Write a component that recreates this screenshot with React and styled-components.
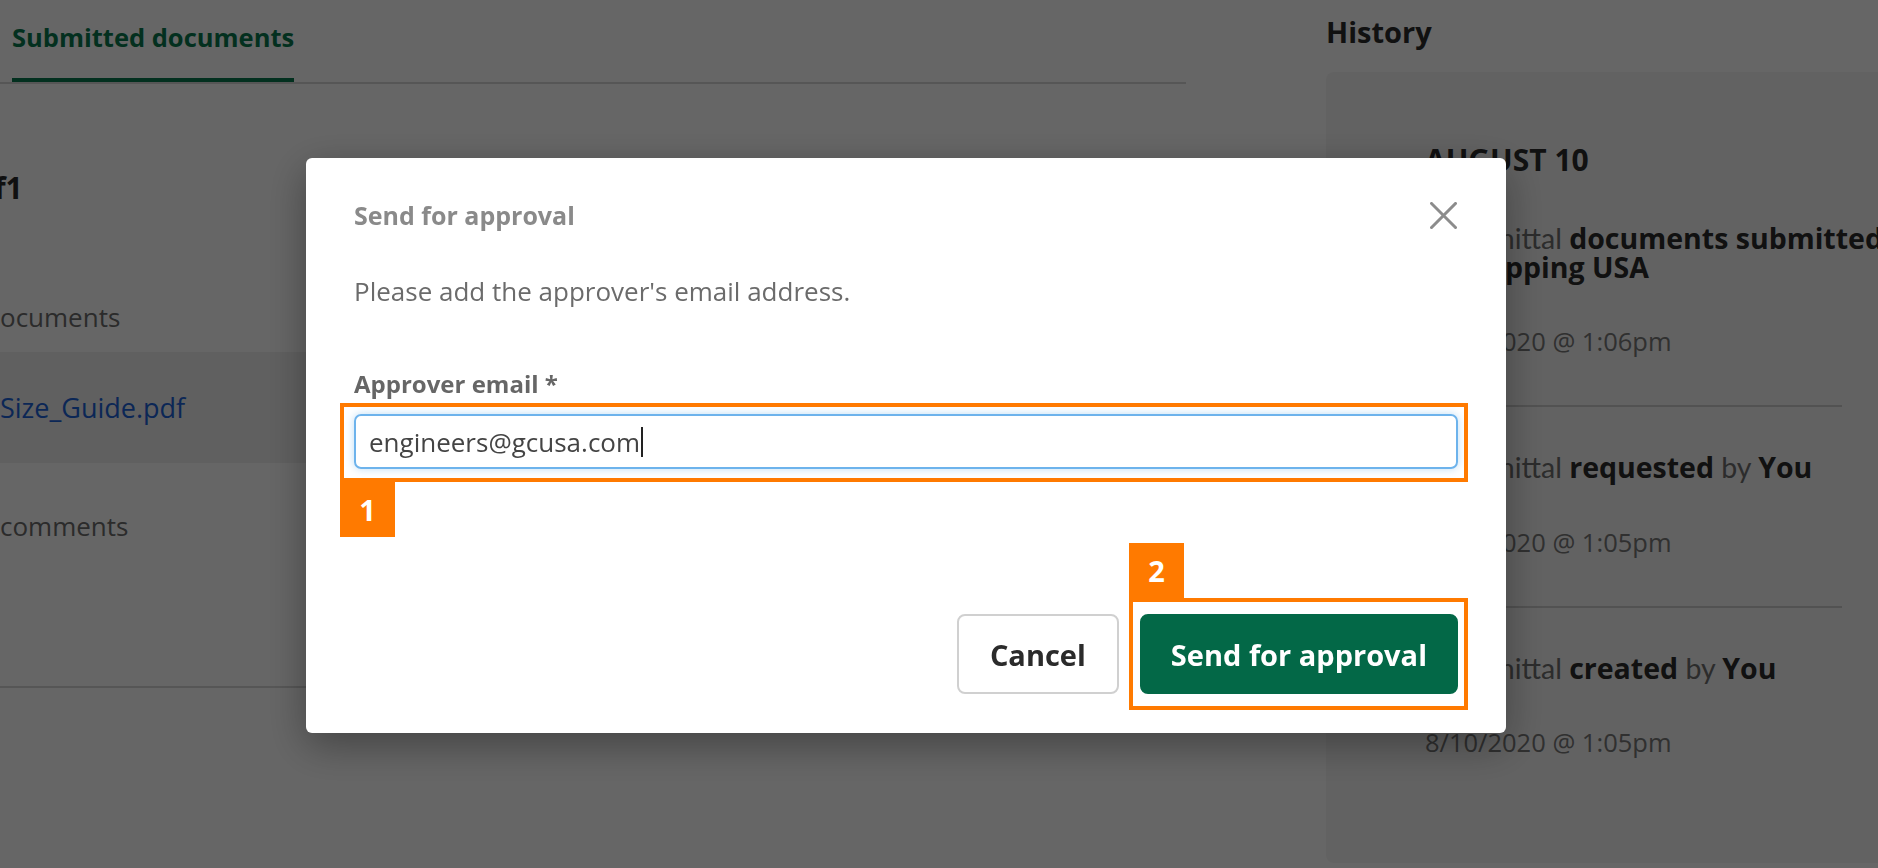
import React from 'react';
import styled, { createGlobalStyle } from 'styled-components';

const GlobalStyle = createGlobalStyle`
  * { box-sizing: border-box; }
  html, body {
    margin: 0;
    padding: 0;
  }
  body {
    width: 1878px;
    height: 868px;
    overflow: hidden;
    background: #fff;
    font-family: "Open Sans", "Liberation Sans", sans-serif;
  }
`;

const Page = styled.div`
  display: flex;
  width: 1878px;
  height: 868px;
  overflow: hidden;
`;

/* ---------- main column ---------- */

const Main = styled.main`
  flex: 0 0 1186px;
  display: flex;
  flex-direction: column;
`;

const TabBar = styled.div`
  display: flex;
  height: 84px;
  padding-left: 12px;
  border-bottom: 2px solid #d6d6d6;
`;

const Tab = styled.div`
  height: 82px;
  padding-top: 21px;
  border-bottom: 4px solid ${p => (p.$active ? '#08784e' : 'transparent')};
  font-size: 25.5px;
  line-height: 32px;
  font-weight: 700;
  color: #08784e;
  white-space: nowrap;
`;

const Count = styled.div`
  margin: 86px 0 0 -6px;
  font-size: 30px;
  line-height: 36px;
  font-weight: 700;
  color: #2a2a2a;
`;

const SectionLabel = styled.div`
  margin-top: ${p => p.$top}px;
  font-size: 26px;
  line-height: 36px;
  color: #6c6c6c;
`;

const FileRow = styled.div`
  margin-top: 17px;
  height: 111px;
  display: flex;
  align-items: center;
  background: #f0f0f0;
`;

const FileLink = styled.a`
  font-size: 27px;
  color: #1d62d6;
  text-decoration: none;
`;

const Rule = styled.hr`
  margin: 142px 0 0;
  border: 0;
  border-top: 2px solid #d8d8d8;
`;

/* ---------- history column ---------- */

const Aside = styled.aside`
  flex: 0 0 640px;
  margin-left: 140px;
  display: flex;
  flex-direction: column;
  padding: 14px 0 5px;
`;

const AsideTitle = styled.h2`
  margin: 0;
  font-size: 29px;
  line-height: 36px;
  font-weight: 700;
  color: #2b2b2b;
`;

const Panel = styled.div`
  flex: 1;
  margin-top: 22px;
  padding: 70px 0 0 99px;
  background: #f5f5f5;
  border-radius: 8px;
`;

const Day = styled.div`
  font-size: 30px;
  line-height: 36px;
  font-weight: 700;
  color: #2b2b2b;
`;

const Events = styled.ul`
  list-style: none;
  margin: 0;
  padding: 0;
  width: 417px;
`;

const Event = styled.li`
  padding: 46px 0 49px;
  border-bottom: ${p => (p.$last ? 'none' : '2px solid #cdcdcd')};
`;

const Line = styled.div`
  font-family: Lato, "Open Sans", sans-serif;
  font-weight: 400;
  font-size: 28.5px;
  line-height: 28.5px;
  color: #6e6e6e;
  white-space: nowrap;

  b {
    font-family: "Open Sans", sans-serif;
    font-weight: 700;
    color: #2b2b2b;
  }
`;

const Stamp = styled.div`
  margin-top: 45px;
  font-size: 25.5px;
  line-height: 30px;
  color: #787878;
  white-space: nowrap;
`;

/* ---------- dialog ---------- */

const Overlay = styled.div`
  position: fixed;
  inset: 0;
  display: flex;
  align-items: flex-start;
  padding: 158px 0 0 306px;
  background: rgba(0, 0, 0, 0.6);
`;

const Dialog = styled.div`
  position: relative;
  width: 1200px;
  display: flex;
  flex-direction: column;
  padding: 41px 48px 39px;
  background: #fff;
  border-radius: 6px;
  box-shadow: 0 12px 40px rgba(0, 0, 0, 0.35);
`;

const Header = styled.div`
  display: flex;
  align-items: center;
  justify-content: space-between;
  height: 32px;
`;

const Title = styled.h2`
  margin: 0;
  font-size: 25px;
  line-height: 32px;
  font-weight: 700;
  color: #8a8a8a;
`;

const CloseButton = styled.button`
  display: flex;
  width: 27px;
  height: 27px;
  margin-right: 1px;
  padding: 0;
  border: 0;
  background: none;
  cursor: pointer;
`;

const Description = styled.p`
  margin: 43px 0 0;
  font-size: 26px;
  line-height: 34px;
  color: #6b6b6b;
`;

const Label = styled.label`
  margin-top: 61px;
  font-size: 24px;
  line-height: 30px;
  font-weight: 700;
  color: #666;
`;

const Field = styled.div`
  margin-top: 15px;
  height: 55px;
  display: flex;
  align-items: center;
  padding-left: 13px;
  border: 2px solid #6db3ec;
  border-radius: 7px;
  box-shadow: 0 0 8px rgba(109, 179, 236, 0.45);
  font-size: 26px;
  color: #444;
`;

const Caret = styled.span`
  display: inline-block;
  width: 2px;
  height: 30px;
  margin-left: 1px;
  background: #222;
`;

const Actions = styled.div`
  margin-top: 145px;
  display: flex;
  justify-content: flex-end;
  gap: 21px;
`;

const Button = styled.button`
  height: 80px;
  padding: 0 ${p => (p.$primary ? 29 : 31)}px;
  border: 2px solid ${p => (p.$primary ? '#036847' : '#d0d0d0')};
  border-radius: 8px;
  background: ${p => (p.$primary ? '#036847' : '#fff')};
  color: ${p => (p.$primary ? '#fff' : '#2b2b2b')};
  font-family: inherit;
  font-size: 29px;
  font-weight: 700;
  cursor: pointer;
`;

/* ---------- annotation callouts ---------- */

const Highlight = styled.div`
  position: absolute;
  left: ${p => p.$x}px;
  top: ${p => p.$y}px;
  width: ${p => p.$w}px;
  height: ${p => p.$h}px;
  border: 4px solid #ff7a00;
  pointer-events: none;
`;

const Marker = styled.div`
  position: absolute;
  left: ${p => p.$x}px;
  top: ${p => p.$y}px;
  width: 55px;
  height: 55px;
  display: flex;
  align-items: center;
  justify-content: center;
  background: #ff7a00;
  color: #fff;
  font-size: 29px;
  font-weight: 700;
`;

const CloseIcon = () => (
  <svg width="27" height="27" viewBox="0 0 27 27" fill="none">
    <path d="M1.5 1.5 L25.5 25.5 M25.5 1.5 L1.5 25.5" stroke="#8c8c8c" strokeWidth="3" strokeLinecap="square" />
  </svg>
);

const history = [
  { lines: [<>Transmittal <b>documents submitted</b></>, <>by <b>Shipping USA</b></>], at: '8/10/2020 @ 1:06pm' },
  { lines: [<>Transmittal <b>requested</b> by <b>You</b></>], at: '8/10/2020 @ 1:05pm' },
  { lines: [<>Transmittal <b>created</b> by <b>You</b></>], at: '8/10/2020 @ 1:05pm' },
];

export default function App() {
  return (
    <>
      <GlobalStyle />
      <Page>
        <Main>
          <TabBar>
            <Tab $active>Submitted documents</Tab>
          </TabBar>
          <Count>f1</Count>
          <SectionLabel $top={93}>ocuments</SectionLabel>
          <FileRow>
            <FileLink href="#">Size_Guide.pdf</FileLink>
          </FileRow>
          <SectionLabel $top={45}>comments</SectionLabel>
          <Rule />
        </Main>

        <Aside>
          <AsideTitle>History</AsideTitle>
          <Panel>
            <Day>AUGUST 10</Day>
            <Events>
              {history.map((item, i) => (
                <Event key={i} $last={i === history.length - 1}>
                  {item.lines.map((l, j) => (
                    <Line key={j}>{l}</Line>
                  ))}
                  <Stamp>{item.at}</Stamp>
                </Event>
              ))}
            </Events>
          </Panel>
        </Aside>
      </Page>

      <Overlay>
        <Dialog role="dialog" aria-label="Send for approval">
          <Header>
            <Title>Send for approval</Title>
            <CloseButton aria-label="Close">
              <CloseIcon />
            </CloseButton>
          </Header>
          <Description>Please add the approver's email address.</Description>
          <Label>Approver email *</Label>
          <Field role="textbox">
            engineers@gcusa.com
            <Caret />
          </Field>
          <Actions>
            <Button>Cancel</Button>
            <Button $primary>Send for approval</Button>
          </Actions>

          <Highlight $x={34} $y={245} $w={1128} $h={79} />
          <Marker $x={34} $y={324}>1</Marker>
          <Highlight $x={823} $y={440} $w={339} $h={112} />
          <Marker $x={823} $y={385}>2</Marker>
        </Dialog>
      </Overlay>
    </>
  );
}
